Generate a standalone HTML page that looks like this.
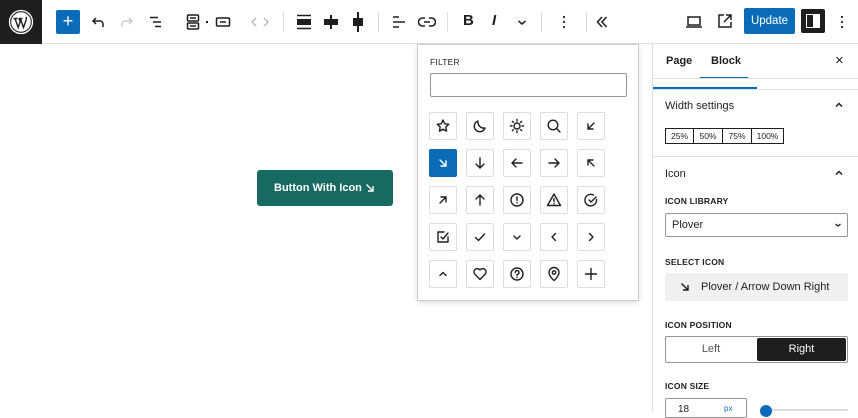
<!DOCTYPE html>
<html><head><meta charset="utf-8"><style>
*{box-sizing:border-box;margin:0;padding:0}
body{width:858px;height:412px;overflow:hidden;background:#fff;font-family:"Liberation Sans",sans-serif;color:#1e1e1e;position:relative}
.a{position:absolute}
svg{display:block}
.cell{position:absolute;width:28px;height:28px;border:1px solid #ddd;border-radius:2px;display:flex;align-items:center;justify-content:center;background:#fff}
.cell svg{width:16px;height:16px;fill:none;stroke:#1e1e1e;stroke-width:1.4;stroke-linecap:round;stroke-linejoin:round}
.lbl{position:absolute;font-size:8.5px;font-weight:bold;letter-spacing:.2px;color:#1e1e1e}
.tb svg{fill:none;stroke:#1e1e1e;stroke-width:1.5}
</style></head><body>
<!-- top bar -->
<div class="a" style="left:0;top:0;width:858px;height:44px;border-bottom:1px solid #e0e0e0"></div>
<div class="a" style="left:0;top:0;width:42px;height:44px;background:#1e1e1e;display:flex;align-items:center;justify-content:center">
<svg width="26" height="26" viewBox="0 0 26 26"><circle cx="13" cy="13" r="11.5" fill="none" stroke="#fff" stroke-width="1.3"/><circle cx="13" cy="13" r="9.8" fill="#fff"/><path d="M5.5 9.5h4M7 9.5l3.2 9 2-6-1.3-3M10.5 9.5h4M12.3 9.5l3.2 9 2.6-7.5c.6-1.8.4-2.4-.2-3" stroke="#1e1e1e" stroke-width="1.4" fill="none"/></svg></div>
<div class="a" style="left:56;left:56px;top:10px;width:24px;height:24px;background:#0a6cb8;border-radius:2px;color:#fff;font-size:18px;line-height:23px;text-align:center">+</div>
<div class="tb">
<svg class="a" style="left:90px;top:14px" width="16" height="16" viewBox="0 0 16 16"><path d="M13 13v-3a3 3 0 0 0-3-3H3M6 4L3 7l3 3"/></svg>
<svg class="a" style="left:119px;top:14px" width="16" height="16" viewBox="0 0 16 16" style="opacity:.3"><path d="M3 13v-3a3 3 0 0 1 3-3h7M10 4l3 3-3 3" stroke="#ccc"/></svg>
<svg class="a" style="left:148px;top:14px" width="16" height="16" viewBox="0 0 16 16"><path d="M2 3.5h8M5 8h8M7 12.5h6"/></svg>
<svg class="a" style="left:185px;top:13px" width="16" height="18" viewBox="0 0 16 18"><rect x="2.5" y="2" width="11" height="6" rx="1"/><rect x="2.5" y="10" width="11" height="6" rx="1"/><path d="M5 5h6M5 13h6"/></svg>
<div class="a" style="left:206px;top:21px;width:2px;height:2px;background:#1e1e1e"></div>
<svg class="a" style="left:215px;top:14px" width="16" height="16" viewBox="0 0 16 16"><rect x="1.5" y="4" width="13" height="8" rx="1"/><path d="M5 8h6"/></svg>
<svg class="a" style="left:250px;top:14px" width="20" height="16" viewBox="0 0 20 16"><path d="M6 4L2 8l4 4M14 4l4 4-4 4" stroke="#bbb"/></svg>
<div class="a" style="left:283px;top:12px;width:1px;height:20px;background:#ddd"></div>
<svg class="a" style="left:296px;top:13px" width="16" height="18" viewBox="0 0 16 18"><path d="M1 2.5h14M1 15.5h14" /><rect x="1" y="6" width="14" height="6" fill="#1e1e1e" stroke="none"/></svg>
<svg class="a" style="left:323px;top:13px" width="16" height="18" viewBox="0 0 16 18"><rect x="1" y="6" width="14" height="6" fill="#1e1e1e" stroke="none"/><path d="M8 2v14" stroke-width="2"/></svg>
<svg class="a" style="left:350px;top:11px" width="16" height="22" viewBox="0 0 16 22"><rect x="3" y="7" width="10" height="8" fill="#1e1e1e" stroke="none"/><path d="M8 1v20" stroke-width="2"/></svg>
<div class="a" style="left:378px;top:12px;width:1px;height:20px;background:#ddd"></div>
<svg class="a" style="left:391px;top:14px" width="16" height="16" viewBox="0 0 16 16"><path d="M2 3h6M2 8h12M2 13h6"/></svg>
<svg class="a" style="left:418px;top:14px" width="18" height="16" viewBox="0 0 18 16"><path d="M7 4H4.5a4 4 0 0 0 0 8H7M11 4h2.5a4 4 0 0 1 0 8H11M6 8h6"/></svg>
<div class="a" style="left:447px;top:12px;width:1px;height:20px;background:#ddd"></div>
<div class="a" style="left:463px;top:12px;font-size:15px;font-weight:bold">B</div>
<div class="a" style="left:492px;top:12px;font-size:15px;font-weight:bold;font-style:italic">I</div>
<svg class="a" style="left:514px;top:14px" width="16" height="16" viewBox="0 0 16 16"><path d="M4.5 7l3.5 3 3.5-3"/></svg>
<div class="a" style="left:541px;top:12px;width:1px;height:20px;background:#ddd"></div>
<svg class="a" style="left:556px;top:13px" width="16" height="18" viewBox="0 0 16 18"><circle cx="8" cy="4" r="1.1" fill="#1e1e1e" stroke="none"/><circle cx="8" cy="9" r="1.1" fill="#1e1e1e" stroke="none"/><circle cx="8" cy="14" r="1.1" fill="#1e1e1e" stroke="none"/></svg>
<div class="a" style="left:586px;top:12px;width:1px;height:20px;background:#ddd"></div>
<svg class="a" style="left:594px;top:14px" width="16" height="16" viewBox="0 0 16 16"><path d="M8 3L3.5 8 8 13M12.5 3L8 8l4.5 5"/></svg>
<svg class="a" style="left:685px;top:14px" width="18" height="16" viewBox="0 0 18 16"><rect x="3" y="3" width="12" height="8"/><path d="M1 13h16"/></svg>
<svg class="a" style="left:716px;top:12px" width="18" height="18" viewBox="0 0 18 18"><path d="M8 3H3v12h12v-5M10 3h5v5M15 3L8 10"/></svg>
</div>
<div class="a" style="left:744px;top:8px;width:51px;height:26px;background:#0a6cb8;border-radius:2px;color:#fff;font-size:11.5px;line-height:26px;text-align:center">Update</div>
<div class="a" style="left:801px;top:9px;width:24px;height:24px;background:#1e1e1e;border-radius:2px"><div class="a" style="left:5px;top:5px;width:14px;height:14px;border:1.5px solid #fff"></div><div class="a" style="left:12px;top:5px;width:7px;height:14px;background:#fff"></div></div>
<svg class="a" style="left:838px;top:13px" width="8" height="18" viewBox="0 0 8 18"><circle cx="4" cy="4" r="1.1" fill="#1e1e1e"/><circle cx="4" cy="9" r="1.1" fill="#1e1e1e"/><circle cx="4" cy="14" r="1.1" fill="#1e1e1e"/></svg>

<!-- canvas button -->
<div class="a" style="left:257px;top:170px;width:136px;height:36px;background:#176a62;border-radius:3px;color:#fff;font-size:11px;font-weight:bold;line-height:36px;padding-left:17px">Button With Icon
<svg class="a" style="left:108px;top:13px" width="10" height="10" viewBox="0 0 10 10"><path d="M1.5 1.5l6 6M8 3v5H3" stroke="#fff" stroke-width="1.4" fill="none"/></svg></div>

<!-- popover -->
<div class="a" style="left:417px;top:44px;width:222px;height:257px;background:#fff;border:1px solid #ccc;box-shadow:0 2px 6px rgba(0,0,0,.12)"></div>
<div class="lbl" style="left:430px;top:57px;font-weight:normal;font-size:8.5px;color:#1e1e1e">FILTER</div>
<div class="a" style="left:430px;top:73px;width:197px;height:24px;border:1px solid #949494;border-radius:2px"></div>
<div class="cell" style="left:429px;top:112px"><svg viewBox="0 0 16 16"><path d="M8 2l1.8 3.8 4 .5-3 2.8.8 4L8 11.2 4.4 13.1l.8-4-3-2.8 4-.5z"/></svg></div>
<div class="cell" style="left:466px;top:112px"><svg viewBox="0 0 16 16"><path d="M13 10A6 6 0 0 1 6 3a5.5 5.5 0 1 0 7 7z"/></svg></div>
<div class="cell" style="left:503px;top:112px"><svg viewBox="0 0 16 16"><circle cx="8" cy="8" r="3"/><path d="M8 1.5v1.5M8 13v1.5M1.5 8H3M13 8h1.5M3.4 3.4l1 1M11.6 11.6l1 1M3.4 12.6l1-1M11.6 4.4l1-1"/></svg></div>
<div class="cell" style="left:540px;top:112px"><svg viewBox="0 0 16 16"><circle cx="7" cy="7" r="4.8"/><path d="M10.5 10.5L14 14"/></svg></div>
<div class="cell" style="left:577px;top:112px"><svg viewBox="0 0 16 16"><path d="M11 5L5 11M5 6v5h5"/></svg></div>

<div class="cell" style="left:429px;top:149px;background:#0a6cb8;border-color:#0a6cb8"><svg viewBox="0 0 16 16" style="stroke:#fff"><path d="M5 5l6 6M11 6v5H6"/></svg></div>
<div class="cell" style="left:466px;top:149px"><svg viewBox="0 0 16 16"><path d="M8 3v10M4 9l4 4 4-4"/></svg></div>
<div class="cell" style="left:503px;top:149px"><svg viewBox="0 0 16 16"><path d="M13 8H3M7 4L3 8l4 4"/></svg></div>
<div class="cell" style="left:540px;top:149px"><svg viewBox="0 0 16 16"><path d="M3 8h10M9 4l4 4-4 4"/></svg></div>
<div class="cell" style="left:577px;top:149px"><svg viewBox="0 0 16 16"><path d="M11 11L5 5M5 10V5h5"/></svg></div>

<div class="cell" style="left:429px;top:186px"><svg viewBox="0 0 16 16"><path d="M5 11l6-6M6 5h5v5"/></svg></div>
<div class="cell" style="left:466px;top:186px"><svg viewBox="0 0 16 16"><path d="M8 13V3M4 7l4-4 4 4"/></svg></div>
<div class="cell" style="left:503px;top:186px"><svg viewBox="0 0 16 16"><circle cx="8" cy="8" r="6"/><path d="M8 5v3.5M8 10.8v.3"/></svg></div>
<div class="cell" style="left:540px;top:186px"><svg viewBox="0 0 16 16"><path d="M8 2L14.5 13.5h-13z"/><path d="M8 6.5v3M8 11.5v.2"/></svg></div>
<div class="cell" style="left:577px;top:186px"><svg viewBox="0 0 16 16"><path d="M13.5 7.5A5.8 5.8 0 1 1 10.5 3M6 8l2 2 5-5"/></svg></div>

<div class="cell" style="left:429px;top:223px"><svg viewBox="0 0 16 16"><path d="M13 8v5H3V3h6M6 8l2 2 5-6"/></svg></div>
<div class="cell" style="left:466px;top:223px"><svg viewBox="0 0 16 16"><path d="M3.5 8.5l3 3 6-6.5"/></svg></div>
<div class="cell" style="left:503px;top:223px"><svg viewBox="0 0 16 16"><path d="M5 7l3 3 3-3"/></svg></div>
<div class="cell" style="left:540px;top:223px"><svg viewBox="0 0 16 16"><path d="M9.5 4.5L6 8l3.5 3.5"/></svg></div>
<div class="cell" style="left:577px;top:223px"><svg viewBox="0 0 16 16"><path d="M6.5 4.5L10 8l-3.5 3.5"/></svg></div>

<div class="cell" style="left:429px;top:260px"><svg viewBox="0 0 16 16"><path d="M5 9.5l3-3 3 3"/></svg></div>
<div class="cell" style="left:466px;top:260px"><svg viewBox="0 0 16 16"><path d="M8 13.5L2.6 8A3.2 3.2 0 0 1 8 4a3.2 3.2 0 0 1 5.4 4z"/></svg></div>
<div class="cell" style="left:503px;top:260px"><svg viewBox="0 0 16 16"><circle cx="8" cy="8" r="6"/><path d="M6.2 6.5a1.9 1.9 0 1 1 2.4 1.8c-.5.2-.6.6-.6 1.2M8 11.3v.2"/></svg></div>
<div class="cell" style="left:540px;top:260px"><svg viewBox="0 0 16 16"><path d="M8 14.5s-5-4.3-5-8a5 5 0 0 1 10 0c0 3.7-5 8-5 8z"/><circle cx="8" cy="6.5" r="1.7"/></svg></div>
<div class="cell" style="left:577px;top:260px"><svg viewBox="0 0 16 16"><path d="M8 2.5v11M2.5 8h11"/></svg></div>

<!-- sidebar -->
<div class="a" style="left:652px;top:44px;width:1px;height:368px;background:#e0e0e0"></div>
<div class="a" style="left:666px;top:55px;font-size:11px;font-weight:bold">Page</div>
<div class="a" style="left:711px;top:55px;font-size:11px;font-weight:bold">Block</div>
<div class="a" style="left:835px;top:52px;font-size:15px">×</div>
<div class="a" style="left:700px;top:77px;width:48px;height:1.5px;background:#0a6cb8"></div>
<div class="a" style="left:653px;top:78px;width:205px;height:1px;background:#e0e0e0"></div>
<div class="a" style="left:653px;top:87px;width:104px;height:1.5px;background:#0a6cb8"></div>
<div class="a" style="left:653px;top:88.5px;width:205px;height:1px;background:#e0e0e0"></div>
<div class="a" style="left:665px;top:100px;font-size:11px">Width settings</div>
<svg class="a" style="left:833px;top:100px" width="12" height="10" viewBox="0 0 12 10"><path d="M3 6.5l3-3 3 3" stroke="#1e1e1e" stroke-width="1.5" fill="none"/></svg>
<div class="a" style="left:665px;top:128px;height:16px;border:1px solid #1e1e1e;display:flex;font-size:8.5px;line-height:14px">
<div style="width:28px;text-align:center;border-right:1px solid #1e1e1e">25%</div><div style="width:29px;text-align:center;border-right:1px solid #1e1e1e">50%</div><div style="width:29px;text-align:center;border-right:1px solid #1e1e1e">75%</div><div style="width:31px;text-align:center">100%</div></div>
<div class="a" style="left:653px;top:156px;width:205px;height:1px;background:#e0e0e0"></div>
<div class="a" style="left:665px;top:168px;font-size:11px">Icon</div>
<svg class="a" style="left:833px;top:168px" width="12" height="10" viewBox="0 0 12 10"><path d="M3 6.5l3-3 3 3" stroke="#1e1e1e" stroke-width="1.5" fill="none"/></svg>
<div class="lbl" style="left:665px;top:196px">ICON LIBRARY</div>
<div class="a" style="left:665px;top:213px;width:183px;height:24px;border:1px solid #949494;border-radius:2px;font-size:11px;line-height:22px;padding-left:6px">Plover</div>
<svg class="a" style="left:833px;top:220px" width="10" height="10" viewBox="0 0 10 10"><path d="M2.5 4l2.5 2 2.5-2" stroke="#1e1e1e" stroke-width="1.3" fill="none"/></svg>
<div class="lbl" style="left:665px;top:257px">SELECT ICON</div>
<div class="a" style="left:665px;top:273px;width:183px;height:28px;background:#f0f0f0;border-radius:2px;font-size:11px;line-height:28px;padding-left:36px">Plover / Arrow Down Right</div>
<svg class="a" style="left:680px;top:282px" width="10" height="10" viewBox="0 0 10 10"><path d="M1.5 1.5l6 6M8 3v5H3" stroke="#1e1e1e" stroke-width="1.4" fill="none"/></svg>
<div class="lbl" style="left:665px;top:320px">ICON POSITION</div>
<div class="a" style="left:665px;top:336px;width:183px;height:27px;border:1px solid #949494;border-radius:2px"></div>
<div class="a" style="left:665px;top:336px;width:92px;height:27px;font-size:11px;line-height:27px;text-align:center;color:#555">Left</div>
<div class="a" style="left:757px;top:338px;width:89px;height:23px;background:#1e1e1e;border-radius:2px;color:#fff;font-size:11px;line-height:23px;text-align:center">Right</div>
<div class="lbl" style="left:665px;top:381px">ICON SIZE</div>
<div class="a" style="left:665px;top:398px;width:82px;height:20px;border:1px solid #949494;border-radius:2px;font-size:10px;padding:5px 0 0 12px">18<span style="position:absolute;left:58px;color:#0a6cb8;font-size:8px">px</span></div>
<div class="a" style="left:760px;top:409px;width:88px;height:2px;background:#ddd"></div>
<div class="a" style="left:760px;top:405px;width:12px;height:12px;border-radius:50%;background:#0a6cb8"></div>
</body></html>
